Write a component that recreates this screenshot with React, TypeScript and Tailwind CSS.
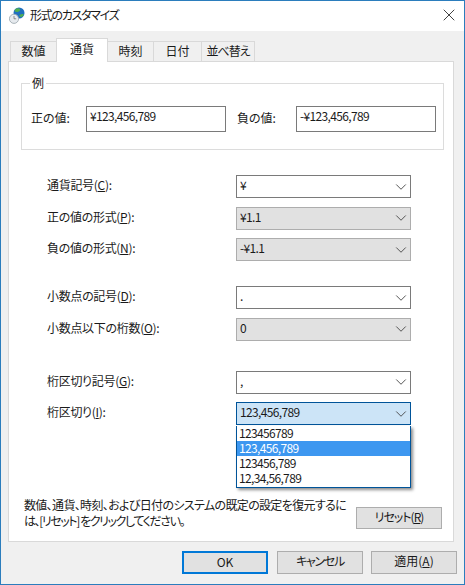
import { ChevronDown, X } from "lucide-react";

const font = { fontFamily: '"Noto Sans CJK JP", "Noto Sans", sans-serif' };

function Mn({ children }: { children: string }) {
  return <span className="underline underline-offset-1">{children}</span>;
}

function Combo({ value, locked, open }: { value: string; locked?: boolean; open?: boolean }) {
  const tone = open
    ? "border-[#005499] bg-[#cce4f7]"
    : locked
      ? "border-[#adadad] bg-[#e1e1e1]"
      : "border-[#7a7a7a] bg-white";
  return (
    <div className={`flex h-[23px] w-[175px] items-center justify-between border pl-[3px] ${tone}`}>
      <span className="pb-[3px] tracking-[-0.65px]">{value}</span>
      <ChevronDown size={18} strokeWidth={1.2} className="text-[#444]" />
    </div>
  );
}

function Row({ label, mn, value, locked, open }: { label: string; mn?: string; value: string; locked?: boolean; open?: boolean }) {
  return (
    <div className="flex h-[23px] items-center">
      <div className="w-[189px] pb-[3px] tracking-[-0.3px]">
        {label}(<Mn>{mn ?? ""}</Mn>):
      </div>
      <Combo value={value} locked={locked} open={open} />
    </div>
  );
}

const tabs = [
  { label: "数値", width: "w-[47px]" },
  { label: "通貨", width: "w-[52px]", active: true },
  { label: "時刻", width: "w-[47px]" },
  { label: "日付", width: "w-[49px]" },
  { label: "並べ替え", width: "w-[54px] tracking-[-1px]" },
];

export default function App() {
  return (
    <div style={font} className="flex h-[585px] w-[465px] flex-col border border-[#2b7dbd] bg-[#f0f0f0] text-[12px] leading-none text-[#1a1a1a] [font-feature-settings:'palt']">
      {/* title bar */}
      <div className="flex h-[30px] shrink-0 items-center bg-white pl-[8px]">
        <svg width="16" height="17" viewBox="0 0 16 17" className="mb-[1px] mr-[5px]">
          <circle cx="10" cy="6" r="5.5" fill="#1f6fc0" />
          <path d="M6 2.5c2-2 4-1.5 5-.5s-1 3-3 3-3-.8-2-2.5zM10.5 8c2-1 4-1.5 4.3-.5s-2 3-3 2.5-2-1-1.3-2z" fill="#4fae4f" />
          <circle cx="5" cy="11.8" r="4.6" fill="#e6eaee" stroke="#98a3ab" strokeWidth="0.8" />
          <path d="M5 9V11.8H7.2" stroke="#666" strokeWidth="0.7" fill="none" />
        </svg>
        <span className="pb-[2px] tracking-[-1.3px]">形式のカスタマイズ</span>
        <X size={20} strokeWidth={1} className="mb-[2px] ml-auto mr-[5px]" />
      </div>

      {/* tabs */}
      <div className="mt-[10px] flex h-[20px] shrink-0 items-end pl-[9px]">
        {tabs.map((t) =>
          t.active ? (
            <div key={t.label} className={`z-10 -mb-px -ml-px flex h-[24px] items-center justify-center border border-b-0 border-[#d9d9d9] bg-white pb-[3px] ${t.width}`}>
              {t.label}
            </div>
          ) : (
            <div key={t.label} className={`-mb-px -ml-px flex h-[21px] items-center justify-center border border-[#d9d9d9] bg-[#f0f0f0] pb-[2px] first:ml-0 ${t.width}`}>
              {t.label}
            </div>
          ),
        )}
      </div>

      {/* panel */}
      <div className="relative ml-[7px] mr-[10px] flex h-[481px] shrink-0 flex-col border border-[#d9d9d9] bg-white pl-[12px] pr-[9px]">
        <fieldset className="mt-[14px] h-[74px] border border-[#dcdcdc] pl-[9px] pr-[7px]">
          <legend className="ml-[-1px] px-[2px] leading-[14px]">例</legend>
          <div className="mt-[16px] flex items-center">
            <span className="w-[55px] pb-[2px]">正の値:</span>
            <div className="h-[26px] w-[140px] border border-[#7a7a7a] pl-[3px] pt-[3px] tracking-[-0.65px]">¥123,456,789</div>
            <span className="ml-[11px] w-[59px] pb-[2px]">負の値:</span>
            <div className="h-[26px] w-[140px] border border-[#7a7a7a] pl-[3px] pt-[3px] tracking-[-0.65px]">-¥123,456,789</div>
          </div>
        </fieldset>

        <div className="ml-[26px] mt-[25px] flex flex-col">
          <div className="flex flex-col gap-[8.5px]">
            <Row label="通貨記号" mn="C" value="¥" />
            <Row label="正の値の形式" mn="P" value="¥1.1" locked />
            <Row label="負の値の形式" mn="N" value="-¥1.1" locked />
          </div>
          <div className="mt-[25px] flex flex-col gap-[8.5px]">
            <Row label="小数点の記号" mn="D" value="." />
            <Row label="小数点以下の桁数" mn="O" value="0" locked />
          </div>
          <div className="mt-[30px] flex flex-col gap-[8.5px]">
            <Row label="桁区切り記号" mn="G" value="," />
            <Row label="桁区切り" mn="I" value="123,456,789" open />
          </div>
        </div>

        {/* open list */}
        <div className="absolute left-[227px] top-[364px] z-20 flex h-[62px] w-[175px] flex-col border border-t-0 border-[#005499] bg-white shadow-[2px_2px_3px_rgba(0,0,0,0.45)] tracking-[-0.65px]">
          <div className="flex h-[15px] items-center pb-[2px] pl-[2px]">123456789</div>
          <div className="flex h-[15px] items-center bg-[#3d97f0] pb-[2px] pl-[2px] text-white">123,456,789</div>
          <div className="flex h-[15px] items-center pb-[2px] pl-[2px]">123456,789</div>
          <div className="flex h-[15px] items-center pb-[2px] pl-[2px]">12,34,56,789</div>
        </div>

        <div className="mt-auto flex items-end pb-[12px] pl-[3px]">
          <div className="w-[332px] whitespace-nowrap leading-[16px]">
            <div className="tracking-[-0.65px]">数値、通貨、時刻、および日付のシステムの既定の設定を復元するに</div>
            <div className="tracking-[-1.4px]">は、[リセット] をクリックしてください。</div>
          </div>
          <button className="h-[22px] w-[86px] border border-[#adadad] bg-[#e1e1e1] pb-[3px] tracking-[-1px]">
            リセット(<Mn>R</Mn>)
          </button>
        </div>
      </div>

      {/* footer */}
      <div className="flex flex-1 items-start justify-end gap-[8px] pr-[7px] pt-[9px]">
        <button className="mr-px h-[23px] w-[86px] border-2 border-[#0078d7] bg-[#e1e1e1] pb-[2px]">OK</button>
        <button className="h-[23px] w-[86px] border border-[#adadad] bg-[#e1e1e1] pb-[3px] tracking-[-1.3px]">キャンセル</button>
        <button className="h-[23px] w-[86px] border border-[#adadad] bg-[#e1e1e1] pb-[3px]">
          適用(<Mn>A</Mn>)
        </button>
      </div>
    </div>
  );
}
